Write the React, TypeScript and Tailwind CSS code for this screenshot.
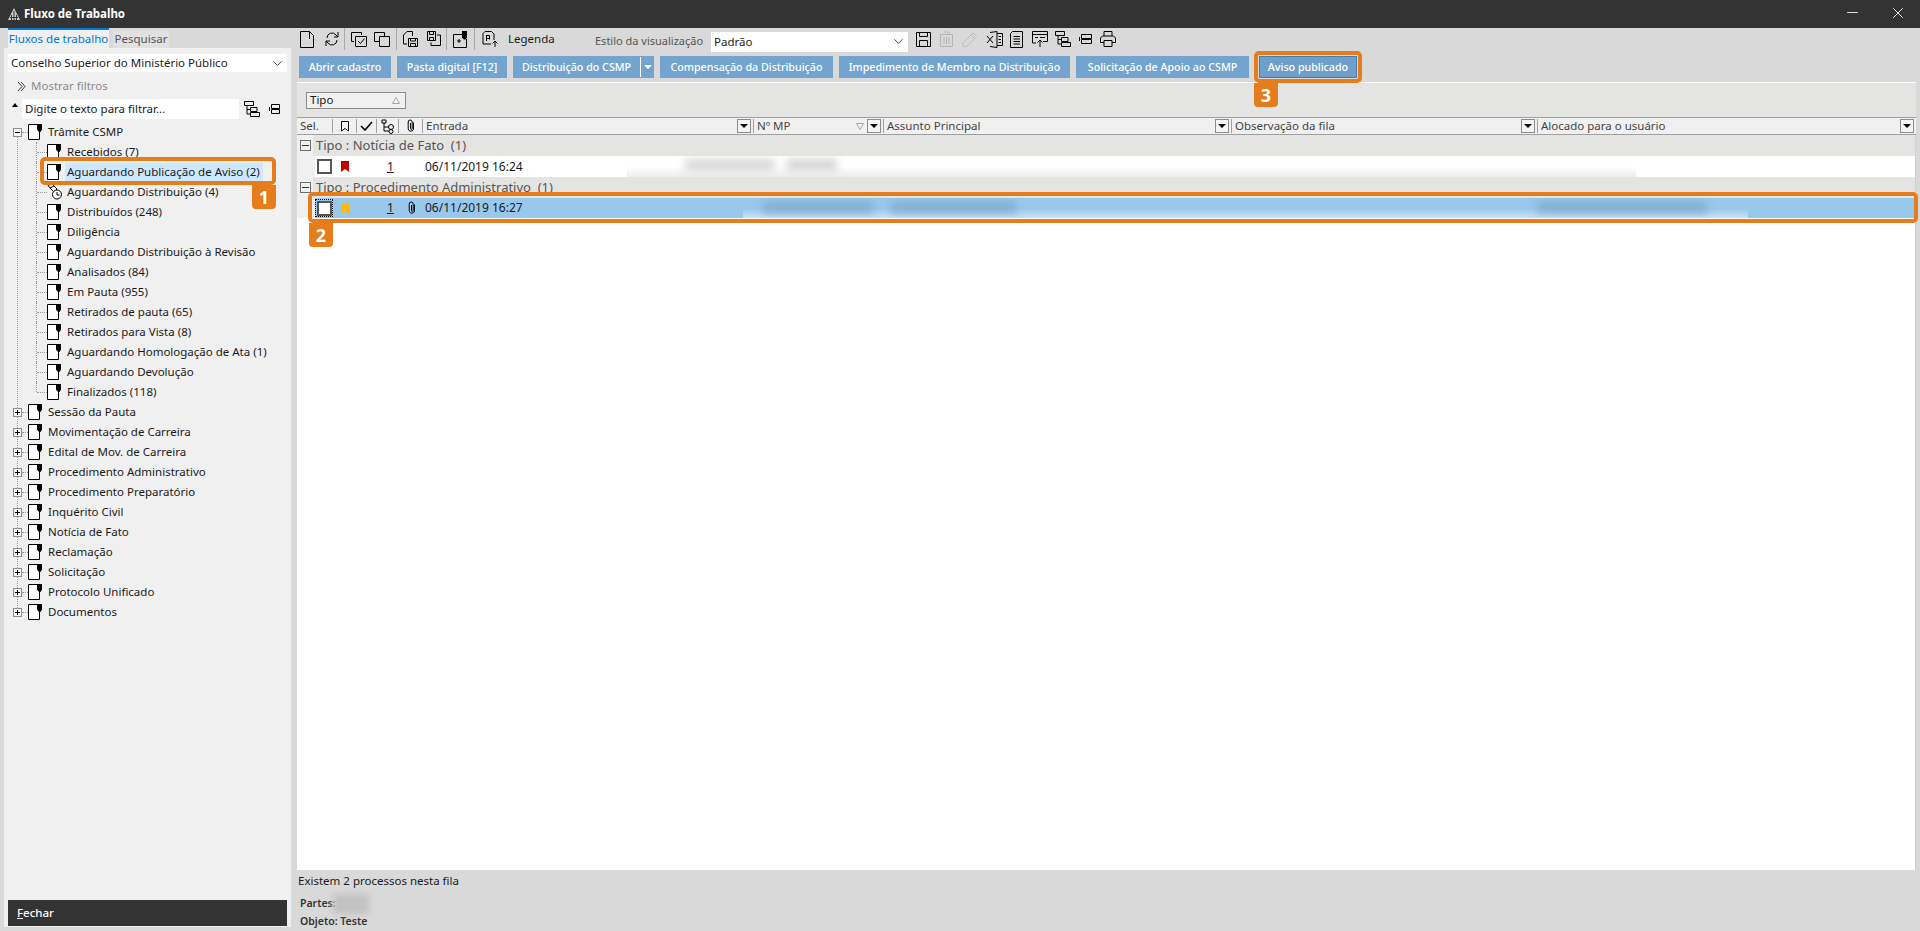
import React from 'react';
import { ChevronDown, Minus, X } from 'lucide-react';

const DocIcon = () => (
  <svg width="15" height="16" viewBox="0 0 15 16" className="shrink-0">
    <path d="M9.5 0.5H0.5V15.5H11.5V8" fill="#fff" stroke="#000" strokeWidth="1" />
    <path d="M9 0H14V5.5L12.5 8H11L9 5.5Z" fill="#000" />
  </svg>
);

const ClockDocIcon = () => (
  <svg width="15" height="18" viewBox="0 0 15 18" fill="none" stroke="#000" className="shrink-0">
    <path d="M1 2.5L5 0.5L8 4L5 7Z" />
    <path d="M3 5L7 3L10 6L7 9Z" fill="#fff" />
    <circle cx="10" cy="11.5" r="4.5" fill="#fff" />
    <path d="M10 9V12H12.5" />
  </svg>
);

const HierarchyIcon = () => (
  <svg width="16" height="16" viewBox="0 0 16 16" fill="none" stroke="#000" className="shrink-0">
    <path d="M0.5 0.5H9.5V4.5H0.5ZM3 4.5V13H6M3 8.5H6M6.5 6.5H13V10.5H6.5ZM6.5 11.5H15.5V15.5H6.5Z" />
  </svg>
);

const CollapseIcon = ({ w = 12 }: { w?: number }) => (
  <svg width={w} height="12" viewBox={`0 0 ${w} 12`} fill="none" stroke="#000" className="shrink-0">
    <path d={`M2.5 1.5H${w - 1.5}V5.5H2.5ZM2.5 6.5H${w - 1.5}V10.5H2.5ZM0.5 4V8`} />
  </svg>
);

const ClipIcon = () => (
  <svg width="8" height="14" viewBox="0 0 8 14" fill="none" stroke="#000" className="shrink-0">
    <path d="M6.5 3.5V10A2.7 2.7 0 0 1 1.2 10V3A2 2 0 0 1 5.2 3V9.5A0.8 0.8 0 0 1 3.5 9.5V4" />
  </svg>
);

// icones da barra superior, desenhados em 16x16
const toolbarPaths: Record<string, React.ReactNode> = {
  newDoc: <path d="M0.5 0.5H9.5L13.5 4.5V16.5H0.5ZM9.5 0.5V8" />,
  refresh: <path d="M3 7A5 5 0 0 1 12 4L14 6M14 1V6H10M13 9A5 5 0 0 1 4 12L2 10M2 15V10H6" />,
  checkDocs: <path d="M0.5 1.5H10.5V4M0.5 1.5V10.5H3M4.5 5.5H15.5V15.5H4.5ZM7 10L9.5 12.5L13.5 7.5" />,
  copyDocs: <path d="M0.5 1.5H10.5V5M0.5 1.5V10.5H5M5.5 5.5H15.5V15.5H5.5Z" />,
  saveDoc: <path d="M5 0.5H10.5V5M5 0.5L1.5 4V13H5M6.5 7.5H15.5V15.5H6.5ZM8.5 7.5V10H13.5V7.5M8.5 15.5V12.5H13.5V15.5" />,
  saveCopy: <path d="M2.5 0.5H10.5V9.5H2.5ZM4.5 0.5V3.5H8.5V0.5M4.5 9.5V6.5H8.5V9.5M12 4H15.5V14.5H6V11.5" />,
  legend: <path d="M3 0.5H9.5L12 3V9M3 0.5L1 2.5V13H9M4.5 4.5H7.5V8.5M4.5 4.5V10M4.5 4.5V7.5H7.5M13 10V16M10.5 12.5L13 10L15.5 12.5" />,
  save: <path d="M0.5 1.5H14.5V15.5H0.5ZM3.5 1.5V5.5H11.5V1.5M3.5 15.5V9.5H11.5V15.5" />,
  excel: <path d="M4 1.5L11 0.5V16.5L4 15.5M11 2.5H16.5V14.5H11M12.5 5.5H15M12.5 8.5H15M12.5 11.5H15M1 5L7 12M7 5L1 12" />,
  list: <path d="M2.5 0.5H12.5V16.5H0.5V2.5ZM3.5 5.5H10M3.5 8H10M3.5 10.5H10M3.5 13H10" />,
  window: <path d="M0.5 0.5H15.5V10.5H11M0.5 0.5V12H4M0.5 3.5H15.5M3 6.5H6M8 6.5H13M8 16V9M5.5 11.5L8 9L10.5 11.5" />,
};

const ToolIcon = ({ name, w = 16 }: { name: string; w?: number }) => (
  <svg width={w} height="17" viewBox={`0 0 ${w} 17`} fill="none" stroke="#000" className="shrink-0">
    {toolbarPaths[name]}
  </svg>
);

const Sep = () => <div className="w-px h-[22px] bg-[#a9a9a9]" />;

const Expander = ({ open = false }: { open?: boolean }) => (
  <span className="relative flex items-center justify-center w-[9px] h-[9px] border border-[#8f8f8f] bg-[#f4f4f4] shrink-0">
    <span className="w-[5px] h-px bg-black" />
    {!open && <span className="absolute w-px h-[5px] bg-black" />}
  </span>
);

const childQueues = [
  'Recebidos (7)',
  'Aguardando Publicação de Aviso (2)',
  'Aguardando Distribuição (4)',
  'Distribuídos (248)',
  'Diligência',
  'Aguardando Distribuição à Revisão',
  'Analisados (84)',
  'Em Pauta (955)',
  'Retirados de pauta (65)',
  'Retirados para Vista (8)',
  'Aguardando Homologação de Ata (1)',
  'Aguardando Devolução',
  'Finalizados (118)',
];

const rootQueues = [
  'Sessão da Pauta',
  'Movimentação de Carreira',
  'Edital de Mov. de Carreira',
  'Procedimento Administrativo',
  'Procedimento Preparatório',
  'Inquérito Civil',
  'Notícia de Fato',
  'Reclamação',
  'Solicitação',
  'Protocolo Unificado',
  'Documentos',
];

const actions = [
  { label: 'Abrir cadastro', w: 'w-[92px]' },
  { label: 'Pasta digital [F12]', w: 'w-[110px]' },
  { label: 'Distribuição do CSMP', w: 'w-[141px]', split: true },
  { label: 'Compensação da Distribuição', w: 'w-[173px]' },
  { label: 'Impedimento de Membro na Distribuição', w: 'w-[231px]' },
  { label: 'Solicitação de Apoio ao CSMP', w: 'w-[173px]' },
];

const columns = [
  { label: 'Entrada', w: 'w-[331px]' },
  { label: 'Nº MP', w: 'w-[130px]', sort: true },
  { label: 'Assunto Principal', w: 'w-[348px]' },
  { label: 'Observação da fila', w: 'w-[306px]' },
  { label: 'Alocado para o usuário', w: 'flex-1' },
];

const HeaderDrop = () => (
  <span className="flex items-center justify-center w-[14px] h-[14px] border border-[#8c8c8c] bg-[#f4f4f4] shrink-0">
    <span className="w-0 h-0 border-x-[4px] border-x-transparent border-t-[4px] border-t-black" />
  </span>
);

const Bookmark = ({ color }: { color: string }) => (
  <svg width="8" height="11" viewBox="0 0 8 11" className="shrink-0">
    <path d="M0 0H8V11L4 8L0 11Z" fill={color} />
  </svg>
);

const Callout = ({ n, box, badge }: { n: string; box: string; badge: string }) => (
  <>
    <div className={`absolute border-[4px] border-[#e57d1c] rounded-[5px] ${box}`} />
    <div className={`absolute w-[24px] h-[24px] bg-[#e57d1c] rounded-b-[4px] flex items-center justify-center text-white font-bold text-[18px] ${badge}`}>
      {n}
    </div>
  </>
);

export default function App() {
  return (
    <div className="relative w-[1920px] h-[931px] overflow-hidden flex flex-col bg-[#d9d9d9] text-[11.5px] text-[#1a1a1a] font-['Noto_Sans','Open_Sans',sans-serif]">
      {/* barra de titulo */}
      <div className="h-[28px] bg-[#333333] flex items-center text-white shrink-0">
        <svg width="14" height="14" viewBox="0 0 14 14" className="ml-[7px] mr-[3px]">
          <path d="M7 1L13 13H1Z" fill="#c9c9c9" />
          <path d="M7 4V13M4.5 8V13M9.5 8V13M3 10.5H11" stroke="#333" strokeWidth="1" />
        </svg>
        <span className="font-bold text-[11.5px]">Fluxo de Trabalho</span>
        <Minus size={17} className="ml-auto mr-[28px] -mt-[3px]" strokeWidth={1.2} />
        <X size={18} className="mr-[13px] -mt-[2px]" strokeWidth={1.2} />
      </div>

      <div className="flex flex-1 min-h-0">
        {/* painel esquerdo */}
        <div className="w-[295px] pl-[4px] pr-[4px] pb-[4px] flex flex-col shrink-0">
          <div className="flex items-end h-[20px] pl-[4px] gap-[4px] shrink-0">
            <div className="w-[101px] h-[20px] border-t-2 border-[#0078d7] bg-[#f0f0f0] text-[#0078d7] flex items-center justify-center">
              Fluxos de trabalho
            </div>
            <div className="w-[56px] h-[18px] bg-[#e1e1e1] text-[#555] flex items-center justify-center">Pesquisar</div>
          </div>
          <div className="flex-1 bg-[#f0f0f0] px-[4px] flex flex-col">
            <div className="mt-[6px] h-[18px] bg-white flex items-center justify-between pl-[3px] pr-[2px]">
              <span>Conselho Superior do Ministério Público</span>
              <ChevronDown size={15} strokeWidth={1.3} />
            </div>
            <div className="mt-[4px] h-[20px] flex items-center pl-[9px] text-[#8a8a8a]">
              <svg width="10" height="11" viewBox="0 0 10 11" fill="none" stroke="#333" className="mr-[4px]">
                <path d="M1 1L5 5.5L1 10M4 1L8 5.5L4 10" />
              </svg>
              Mostrar filtros
            </div>
            <div className="mt-[2px] h-[21px] flex items-center">
              <span className="ml-[4px] mr-[4px] w-0 h-0 border-x-[3px] border-x-transparent border-b-[4px] border-b-black -mt-[8px]" />
              <div className="w-[217px] h-[20px] bg-white flex items-center pl-[3px]">Digite o texto para filtrar...</div>
              <div className="ml-[5px]"><HierarchyIcon /></div>
              <div className="ml-[9px]"><CollapseIcon /></div>
            </div>

            <div className="mt-[3px] relative">
              {/* linha pontilhada que liga os nos da raiz */}
              <span className="absolute left-[9px] top-[15px] bottom-[10px] border-l border-dotted border-[#999]" />
              <div className="h-[20px] flex items-center pl-[5px]">
                <Expander open />
                <span className="w-[6px] border-t border-dotted border-[#999]" />
                <DocIcon />
                <span className="ml-[5px]">Trâmite CSMP</span>
              </div>
              <div className="ml-[28px]">
                {childQueues.map((q, i) => (
                  <div key={q} className="h-[20px] flex items-center">
                    {i === childQueues.length - 1 ? (
                      <span className="self-start h-[10px] border-l border-dotted border-[#999]" />
                    ) : (
                      <span className="self-stretch border-l border-dotted border-[#999]" />
                    )}
                    <span className="w-[10px] border-t border-dotted border-[#999]" />
                    {q.startsWith('Aguardando Distribuição (') ? <ClockDocIcon /> : <DocIcon />}
                    <span className={`ml-[3px] pl-[2px] pr-[3px] ${q.startsWith('Aguardando Publicação') ? 'bg-[#cce8ff]' : ''}`}>{q}</span>
                  </div>
                ))}
              </div>
              <div>
                {rootQueues.map((q) => (
                  <div key={q} className="h-[20px] flex items-center pl-[5px]">
                    <Expander />
                    <span className="w-[6px] border-t border-dotted border-[#999]" />
                    <DocIcon />
                    <span className="ml-[5px]">{q}</span>
                  </div>
                ))}
              </div>
            </div>

            <div className="mt-auto mb-[1px] h-[26px] bg-[#333333] text-white flex items-center pl-[9px] font-medium">
              <span><span className="underline">F</span>echar</span>
            </div>
          </div>
        </div>

        {/* area principal */}
        <div className="flex-1 min-w-0 flex flex-col pr-[4px]">
          <div className="h-[27px] flex items-center pl-[5px] pb-[5px] shrink-0">
            <ToolIcon name="newDoc" w={15} />
            <div className="ml-[9px]"><ToolIcon name="refresh" /></div>
            <div className="ml-[4px]"><Sep /></div>
            <div className="ml-[6px]"><ToolIcon name="checkDocs" /></div>
            <div className="ml-[7px]"><ToolIcon name="copyDocs" /></div>
            <div className="ml-[6px]"><Sep /></div>
            <div className="ml-[5px]"><ToolIcon name="saveDoc" /></div>
            <div className="ml-[7px]"><ToolIcon name="saveCopy" /></div>
            <div className="ml-[5px]"><Sep /></div>
            <div className="ml-[6px] relative w-[15px] h-[17px]">
              <svg width="15" height="17" viewBox="0 0 15 17" fill="none" stroke="#000">
                <path d="M0.5 3.5H9M0.5 3.5V16.5H13.5V8M4 10H8M6 8V12" />
                <path d="M9 0H14V6.5L12.5 8.5H11L9 6.5Z" fill="#000" stroke="none" />
              </svg>
            </div>
            <div className="ml-[6px]"><Sep /></div>
            <div className="ml-[7px]"><ToolIcon name="legend" /></div>
            <span className="ml-[10px] w-[87px]">Legenda</span>
            <span className="w-[116px] mt-[4px] text-[#555] text-[11px]">Estilo da visualização</span>
            <div className="w-[197px] h-[20px] mt-[5px] bg-white flex items-center justify-between pl-[3px] pr-[2px]">
              <span>Padrão</span>
              <ChevronDown size={15} strokeWidth={1.3} />
            </div>
            <div className="ml-[8px]"><ToolIcon name="save" w={15} /></div>
            <div className="ml-[9px]">
              <svg width="13" height="17" viewBox="0 0 13 17" fill="none" stroke="#b4b4b4">
                <path d="M0.5 3.5H12.5V15.5H0.5ZM4 1H9V3.5M4 6V13M6.5 6V13M9 6V13" />
              </svg>
            </div>
            <div className="ml-[9px]">
              <svg width="16" height="17" viewBox="0 0 16 17" fill="none" stroke="#bcbcbc">
                <path d="M1 12L11 2L14.5 5.5L4.5 15.5H1ZM9 4L12.5 7.5" />
              </svg>
            </div>
            <div className="ml-[8px]"><ToolIcon name="excel" w={17} /></div>
            <div className="ml-[7px]"><ToolIcon name="list" w={13} /></div>
            <div className="ml-[9px]"><ToolIcon name="window" /></div>
            <div className="ml-[7px]"><HierarchyIcon /></div>
            <div className="ml-[8px]"><CollapseIcon w={14} /></div>
            <div className="ml-[7px]">
              <svg width="16" height="16" viewBox="0 0 16 16" fill="none" stroke="#000">
                <path d="M4 5V0.5H12V5M4 11.5H0.5V7L2.5 5H13.5L15.5 7V11.5H12M4 9.5H12V15.5H4Z" />
              </svg>
            </div>
          </div>

          <div className="h-[22px] flex items-stretch gap-[6px] pl-[4px] mt-px shrink-0 text-white font-medium text-[10.7px]">
            {actions.map((a) => (
              <div key={a.label} className={`${a.w} bg-[#72a4cf] flex items-center justify-center`}>
                {a.split ? (
                  <>
                    <span className="flex-1 text-center">{a.label}</span>
                    <span className="w-px h-[20px] bg-white" />
                    <span className="w-[13px] flex justify-center">
                      <span className="w-0 h-0 border-x-[4px] border-x-transparent border-t-[4px] border-t-white" />
                    </span>
                  </>
                ) : (
                  a.label
                )}
              </div>
            ))}
            <div className="ml-[4px] w-[98px] bg-[#6f9fc9] border border-[#3f7fb5] flex items-center justify-center">Aviso publicado</div>
          </div>

          {/* grade */}
          <div className="mt-[4px] ml-[2px] flex-1 min-h-0 flex flex-col border-t border-white">
            <div className="h-[34px] bg-[#e4e4e3] flex items-center pl-[9px] shrink-0">
              <div className="w-[100px] h-[17px] border border-[#8c8c8c] bg-[#f0f0f0] flex items-center justify-between pl-[3px] pr-[5px]">
                <span>Tipo</span>
                <svg width="8" height="7" viewBox="0 0 8 7" fill="none" stroke="#a8a8a8"><path d="M4 0.5L7.5 6.5H0.5Z" /></svg>
              </div>
            </div>
            <div className="h-[18px] bg-[#f0f0f0] border-y border-[#a0a0a0] flex items-center text-[#444] shrink-0">
              <span className="w-[36px] pl-[3px] border-r border-[#a0a0a0] h-[14px] flex items-center">Sel.</span>
              <span className="w-[24px] border-r border-[#a0a0a0] h-[14px] flex items-center justify-center">
                <svg width="8" height="11" viewBox="0 0 8 11" fill="none" stroke="#000"><path d="M0.5 0.5H7.5V10L4 7.5L0.5 10Z" /></svg>
              </span>
              <span className="w-[20px] border-r border-[#a0a0a0] h-[14px] flex items-center justify-center">
                <svg width="13" height="10" viewBox="0 0 13 10" fill="none" stroke="#000" strokeWidth="1.6"><path d="M1 5L5 9L12 1" /></svg>
              </span>
              <span className="w-[22px] border-r border-[#a0a0a0] h-[14px] flex items-center justify-center">
                <svg width="14" height="15" viewBox="0 0 14 15" fill="none" stroke="#000"><path d="M1 1H5V4H1ZM3 4V12H8M3 8H8" /><circle cx="10" cy="8" r="2.5" /><circle cx="10" cy="12.5" r="2" /></svg>
              </span>
              <span className="w-[24px] border-r border-[#a0a0a0] h-[14px] flex items-center justify-center">
                <ClipIcon />
              </span>
              {columns.map((c) => (
                <span key={c.label} className={`${c.w} h-[14px] flex items-center justify-between pl-[3px] pr-[2px] border-r border-[#a0a0a0] last:border-r-0`}>
                  <span>{c.label}</span>
                  <span className="flex items-center gap-[3px]">
                    {c.sort && (
                      <svg width="8" height="7" viewBox="0 0 8 7" fill="none" stroke="#a8a8a8"><path d="M0.5 0.5H7.5L4 6.5Z" /></svg>
                    )}
                    <HeaderDrop />
                  </span>
                </span>
              ))}
            </div>

            <div className="flex-1 min-h-0 bg-white border-r border-[#d0d0d0]">
              <GroupRow label="Tipo : Notícia de Fato  (1)" />
              <div className="relative h-[21px] flex items-center bg-white overflow-hidden">
                <DataCells color="#c00000" date="06/11/2019 16:24" />
                <div className="absolute left-[330px] w-[1009px] top-0 h-full bg-gradient-to-b from-white from-50% to-[#ededed]" />
                <div className="absolute left-[388px] w-[90px] top-[3px] h-[12px] bg-[#d8d8d8] blur-[4px]" />
                <div className="absolute left-[490px] w-[50px] top-[3px] h-[12px] bg-[#d4d4d4] blur-[4px]" />
              </div>
              <GroupRow label="Tipo : Procedimento Administrativo  (1)" />
              <div className="relative h-[21px] flex items-center bg-[#99c8ed] border-b border-white overflow-hidden">
                <DataCells color="#ffb900" date="06/11/2019 16:27" clip />
                <div className="absolute left-[446px] right-[167px] top-0 h-[21px] bg-gradient-to-b from-[#99c8ed] from-50% to-[#cfe4f7]" />
                <div className="absolute left-[466px] w-[110px] top-[3px] h-[12px] bg-[#85afd0] blur-[4px]" />
                <div className="absolute left-[594px] w-[125px] top-[3px] h-[12px] bg-[#85afd0] blur-[4px]" />
                <div className="absolute left-[1240px] w-[170px] top-[3px] h-[12px] bg-[#85afd0] blur-[4px]" />
              </div>
            </div>
            <div className="h-[61px] shrink-0 -ml-[2px] pl-[3px] pt-[2px] bg-[#d9d9d9]">
              <div className="h-[18px] flex items-center">Existem 2 processos nesta fila</div>
              <div className="mt-[4px] pl-[2px] h-[19px] flex items-center relative font-semibold text-[#333] text-[10.5px]">
                Partes:
                <span className="absolute left-[35px] top-0 w-[36px] h-[20px] bg-[#c2c2c2] blur-[3px]" />
              </div>
              <div className="pl-[2px] h-[17px] flex items-center font-semibold text-[#333] text-[10.5px]">Objeto: Teste</div>
            </div>
          </div>
        </div>
      </div>

      <Callout n="1" box="left-[40px] top-[157px] w-[236px] h-[28px]" badge="left-[252px] top-[185px]" />
      <Callout n="2" box="left-[308px] top-[192px] w-[1610px] h-[31px]" badge="left-[309px] top-[223px]" />
      <Callout n="3" box="left-[1254px] top-[51px] w-[108px] h-[32px]" badge="left-[1254px] top-[83px]" />
    </div>
  );
}

function GroupRow({ label }: { label: string }) {
  return (
    <div className="h-[21px] flex items-center bg-[#f0f0f0]">
      <span className="w-[16px] pl-[3px] shrink-0">
        <span className="flex items-center justify-center w-[11px] h-[11px] border border-[#6e6e6e]">
          <span className="w-[7px] h-px bg-[#333]" />
        </span>
      </span>
      <div className="flex-1 h-full bg-[#e4e4e3] flex items-center pl-[3px] text-[13px] text-[#555] whitespace-pre">{label}</div>
    </div>
  );
}

function DataCells({ color, date, clip = false }: { color: string; date: string; clip?: boolean }) {
  return (
    <>
      <div className="w-[18px] h-full bg-[#f0f0f0] shrink-0" />
      <span className={`ml-px w-[16px] h-[16px] flex items-center justify-center shrink-0 ${clip ? 'outline-1 outline-dotted outline-black' : ''}`}>
        <span className="w-[15px] h-[15px] border-2 border-[#555] bg-white" />
      </span>
      <span className="ml-[9px]"><Bookmark color={color} /></span>
      <span className="ml-[38px] w-[6px] underline text-[12px]">1</span>
      <span className="ml-[15px] w-[12px]">
        {clip && <ClipIcon />}
      </span>
      <span className="ml-[5px] text-[12px]">{date}</span>
    </>
  );
}
